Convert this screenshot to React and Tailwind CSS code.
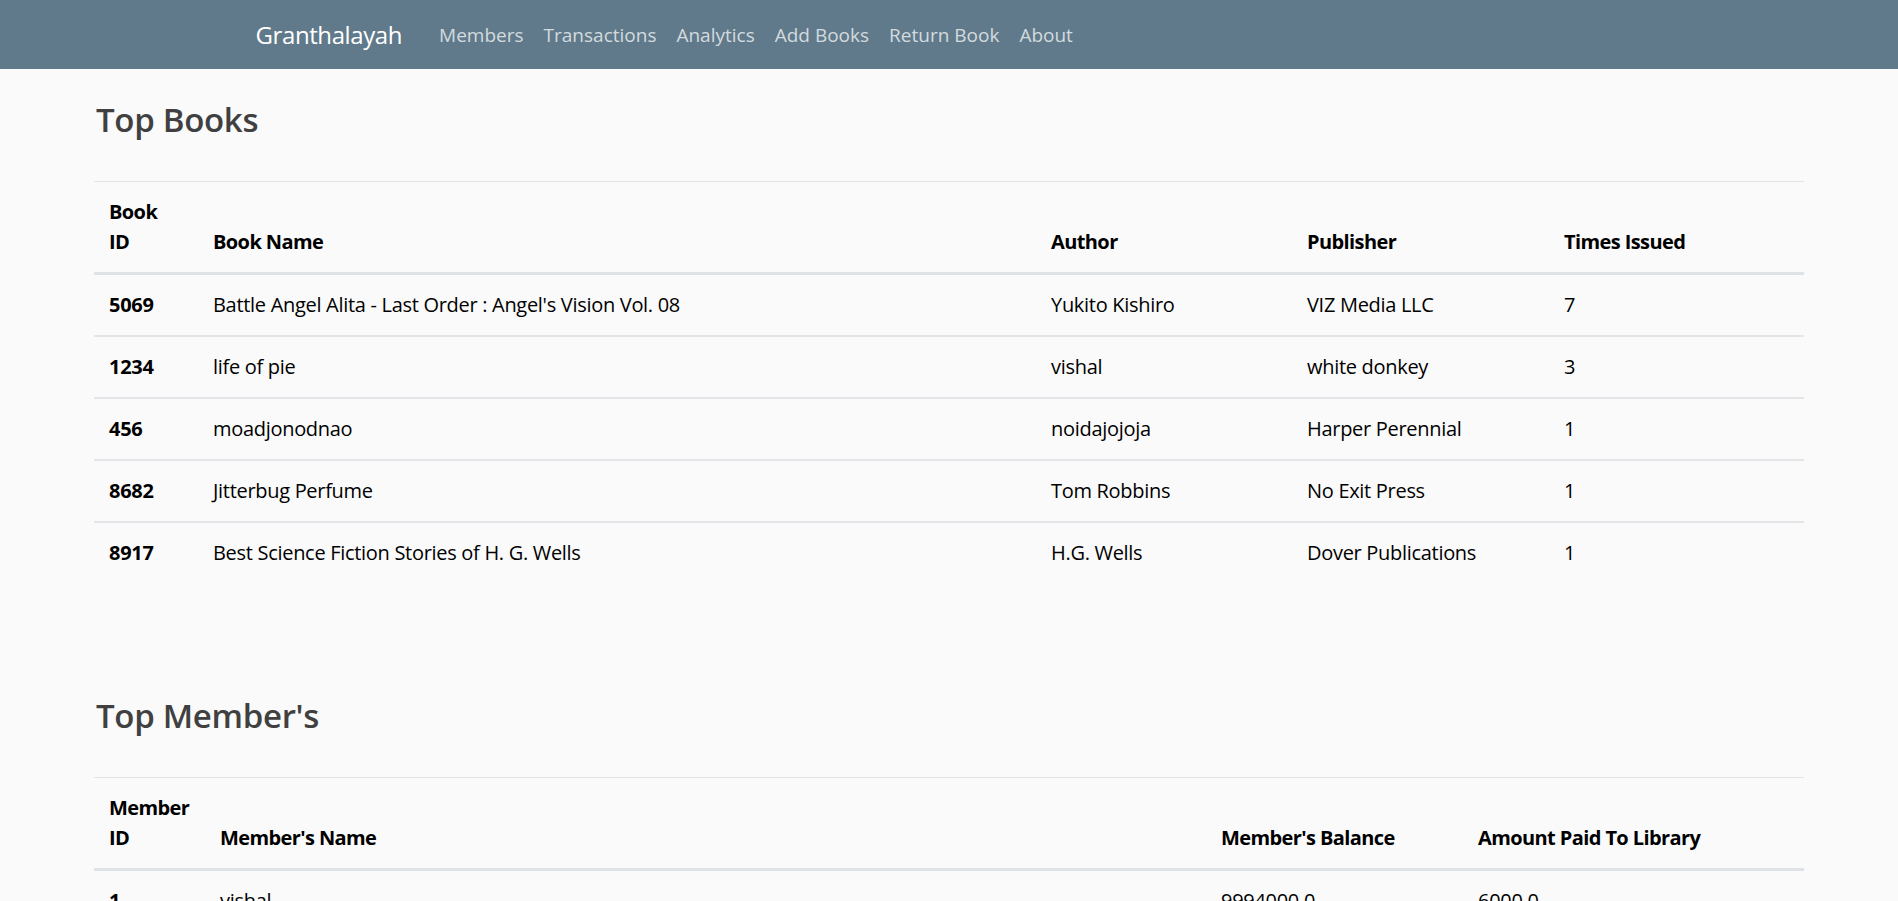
import React from 'react';

const books = [
  { id: '5069', name: "Battle Angel Alita - Last Order : Angel's Vision Vol. 08", author: 'Yukito Kishiro', publisher: 'VIZ Media LLC', issued: '7' },
  { id: '1234', name: 'life of pie', author: 'vishal', publisher: 'white donkey', issued: '3' },
  { id: '456', name: 'moadjonodnao', author: 'noidajojoja', publisher: 'Harper Perennial', issued: '1' },
  { id: '8682', name: 'Jitterbug Perfume', author: 'Tom Robbins', publisher: 'No Exit Press', issued: '1' },
  { id: '8917', name: 'Best Science Fiction Stories of H. G. Wells', author: 'H.G. Wells', publisher: 'Dover Publications', issued: '1' },
];

const members = [
  { id: '1', name: 'vishal', balance: '9994000.0', paid: '6000.0' },
];

const links = ['Members', 'Transactions', 'Analytics', 'Add Books', 'Return Book', 'About'];

const th = 'px-[15px] py-[15px] text-left align-bottom font-bold text-black tracking-[-0.6px]';
const td = 'px-[15px] py-[15px] border-t-2 border-[#e3e5e8] align-top';

const Navbar = () => (
  <nav className="h-[69px] bg-[#607a8b]">
    <div className="mx-auto flex h-full w-[1425px] items-center px-[19px]">
      <a className="mr-[27px] text-[24px] leading-[36px] tracking-[-0.4px] text-white">Granthalayah</a>
      <ul className="flex items-center">
        {links.map((l) => (
          <li key={l}>
            <a className="block px-[10px] text-[19px] leading-[30px] tracking-normal text-[#d3dade]">{l}</a>
          </li>
        ))}
      </ul>
    </div>
  </nav>
);

const Title = ({ children, className }) => (
  <h2 className={`ml-[2px] text-[33px] leading-[43px] font-semibold tracking-[-0.3px] text-[#404040] ${className}`}>{children}</h2>
);

export default function App() {
  return (
    <div className="min-h-screen bg-[#fafafa] text-[20px] leading-[30px] tracking-[-0.3px] text-black" style={{ fontFamily: '"Segoe UI", "Open Sans", sans-serif' }}>
      <Navbar />

      <main className="px-[94px]">
        {/* Top books */}
        <Title className="mt-[29px]">Top Books</Title>
        <table className="mt-[40px] w-full table-fixed border-collapse">
          <colgroup>
            <col className="w-[104px]" />
            <col className="w-[838px]" />
            <col className="w-[256px]" />
            <col className="w-[257px]" />
            <col />
          </colgroup>
          <thead>
            <tr className="border-t border-b-[3px] border-t-[#e1e3e6] border-b-[#dee2e6]">
              <th className={th}>Book<br />ID</th>
              <th className={th}>Book Name</th>
              <th className={th}>Author</th>
              <th className={th}>Publisher</th>
              <th className={th}>Times Issued</th>
            </tr>
          </thead>
          <tbody>
            {books.map((b, i) => (
              <tr key={b.id}>
                <th className={`${td} text-left font-bold ${i === 0 ? 'border-t-0' : ''}`}>{b.id}</th>
                <td className={`${td} ${i === 0 ? 'border-t-0' : ''}`}>{b.name}</td>
                <td className={`${td} ${i === 0 ? 'border-t-0' : ''}`}>{b.author}</td>
                <td className={`${td} ${i === 0 ? 'border-t-0' : ''}`}>{b.publisher}</td>
                <td className={`${td} ${i === 0 ? 'border-t-0' : ''}`}>{b.issued}</td>
              </tr>
            ))}
          </tbody>
        </table>

        {/* Top members */}
        <Title className="mt-[111px]">Top Member's</Title>
        <table className="mt-[40px] w-full table-fixed border-collapse">
          <colgroup>
            <col className="w-[111px]" />
            <col className="w-[1001px]" />
            <col className="w-[257px]" />
            <col />
          </colgroup>
          <thead>
            <tr className="border-t border-b-[3px] border-t-[#e1e3e6] border-b-[#dee2e6]">
              <th className={th}>Member<br />ID</th>
              <th className={th}>Member's Name</th>
              <th className={th}>Member's Balance</th>
              <th className={th}>Amount Paid To Library</th>
            </tr>
          </thead>
          <tbody>
            {members.map((m) => (
              <tr key={m.id}>
                <th className={`${td} border-t-0 text-left font-bold`}>{m.id}</th>
                <td className={`${td} border-t-0`}>{m.name}</td>
                <td className={`${td} border-t-0`}>{m.balance}</td>
                <td className={`${td} border-t-0`}>{m.paid}</td>
              </tr>
            ))}
          </tbody>
        </table>
      </main>
    </div>
  );
}
